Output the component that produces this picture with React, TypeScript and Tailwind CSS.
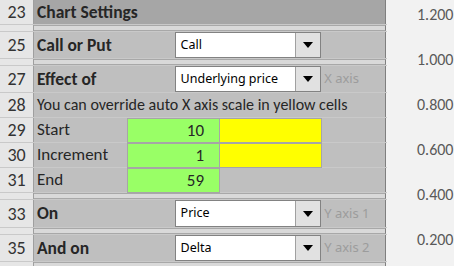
import React from "react";

const CAL = "font-['Carlito','Lato','Liberation_Sans',sans-serif]";
const UI = "font-['Noto_Sans','Open_Sans',sans-serif]";

function RowNum({ n }: { n?: number }) {
  return (
    <div
      className={`w-[34px] shrink-0 border-r border-[#9f9f9f] bg-[#e6e6e6] overflow-hidden flex items-center justify-center text-[18px] text-[#333] ${CAL}`}
    >
      {n ? <span className="leading-none">{n}</span> : null}
    </div>
  );
}

function Dropdown({ value }: { value: string }) {
  return (
    <div className="ml-auto w-[147px] h-full flex border border-[#828282] bg-white">
      <div className={`flex-1 flex items-center pl-[5px] text-[12.5px] text-black ${UI}`}>{value}</div>
      <div className="w-[25px] bg-[#e1e1e1] border-l border-[#a0a0a0] flex items-center justify-center">
        <svg width="10" height="6" viewBox="0 0 10 6">
          <polygon points="0,0 10,0 5,6" fill="#000" />
        </svg>
      </div>
    </div>
  );
}

function Thin() {
  return (
    <div className="flex h-[7px] shrink-0 border-b border-[#c9c9c9]">
      <RowNum />
      <div className="w-[352px] bg-[#d9d9d9] border-y border-[#a8a8a8] border-r border-r-[#7f7f7f]" />
    </div>
  );
}

function SelectRow({
  n,
  label,
  value,
  note,
  h,
}: {
  n: number;
  label: string;
  value: string;
  note?: string;
  h: string;
}) {
  return (
    <div className={`flex shrink-0 ${h} border-b border-[#c9c9c9]`}>
      <RowNum n={n} />
      <div className="w-[352px] flex bg-[#bfbfbf] border-r border-[#7f7f7f]">
        <div className={`w-[141px] flex items-center pl-[3px] font-bold text-[17.5px] text-[#262626] ${CAL}`}>{label}</div>
        <Dropdown value={value} />
        <div className={`w-[64px] flex items-center pl-[3px] text-[13px] text-[#9c9c9c] whitespace-nowrap ${UI}`}>{note}</div>
      </div>
    </div>
  );
}

function InputRow({ n, label, value, yellow }: { n: number; label: string; value: string; yellow?: boolean }) {
  return (
    <div className="flex shrink-0 h-[25px] border-b border-[#c9c9c9]">
      <RowNum n={n} />
      <div className={`w-[352px] flex bg-[#bfbfbf] border-r border-[#7f7f7f] text-[17px] text-[#262626] ${CAL}`}>
        <div className="w-[93px] flex items-center pl-[3px]">{label}</div>
        <div className="w-[93px] -mb-px flex items-center justify-end pr-[15px] bg-[#99ff66] border border-[#a6a6a6]">
          {value}
        </div>
        {yellow ? <div className="w-[102px] -mb-px bg-[#ffff00] border border-l-0 border-[#a6a6a6]" /> : null}
      </div>
    </div>
  );
}

export default function App() {
  const ticks = ["1.200", "1.000", "0.800", "0.600", "0.400", "0.200"];
  return (
    <div className="w-[454px] h-[266px] overflow-hidden flex bg-[#f2f2f2]">
      <div className="w-[387px] shrink-0 flex flex-col">
        <div className="flex shrink-0 h-[25px] border-b border-[#c9c9c9]">
          <RowNum n={23} />
          <div
            className={`w-[352px] flex items-center pl-[3px] bg-[#a6a6a6] border-r border-[#7f7f7f] font-bold text-[17.5px] text-[#262626] ${CAL}`}
          >
            Chart Settings
          </div>
        </div>
        <Thin />
        <SelectRow n={25} label="Call or Put" value="Call" h="h-[27px]" />
        <Thin />
        <SelectRow n={27} label="Effect of" value="Underlying price" note="X axis" h="h-[27px]" />
        <div className="flex shrink-0 h-[25px] border-b border-[#c9c9c9]">
          <RowNum n={28} />
          <div
            className={`w-[352px] flex items-center pl-[3px] bg-[#bfbfbf] border-r border-[#7f7f7f] text-[16px] text-[#262626] whitespace-nowrap ${CAL}`}
          >
            You can override auto X axis scale in yellow cells
          </div>
        </div>
        <InputRow n={29} label="Start" value="10" yellow />
        <InputRow n={30} label="Increment" value="1" yellow />
        <InputRow n={31} label="End" value="59" />
        <Thin />
        <SelectRow n={33} label="On" value="Price" note="Y axis 1" h="h-[28px]" />
        <Thin />
        <SelectRow n={35} label="And on" value="Delta" note="Y axis 2" h="h-[27px]" />
        <Thin />
      </div>
      <div className={`flex-1 flex flex-col pt-[3px] pl-[30px] text-[16px] text-[#595959] ${CAL}`}>
        {ticks.map((t) => (
          <div key={t} className="h-[45px] shrink-0 leading-[24px] whitespace-nowrap">
            {t}
          </div>
        ))}
      </div>
    </div>
  );
}
